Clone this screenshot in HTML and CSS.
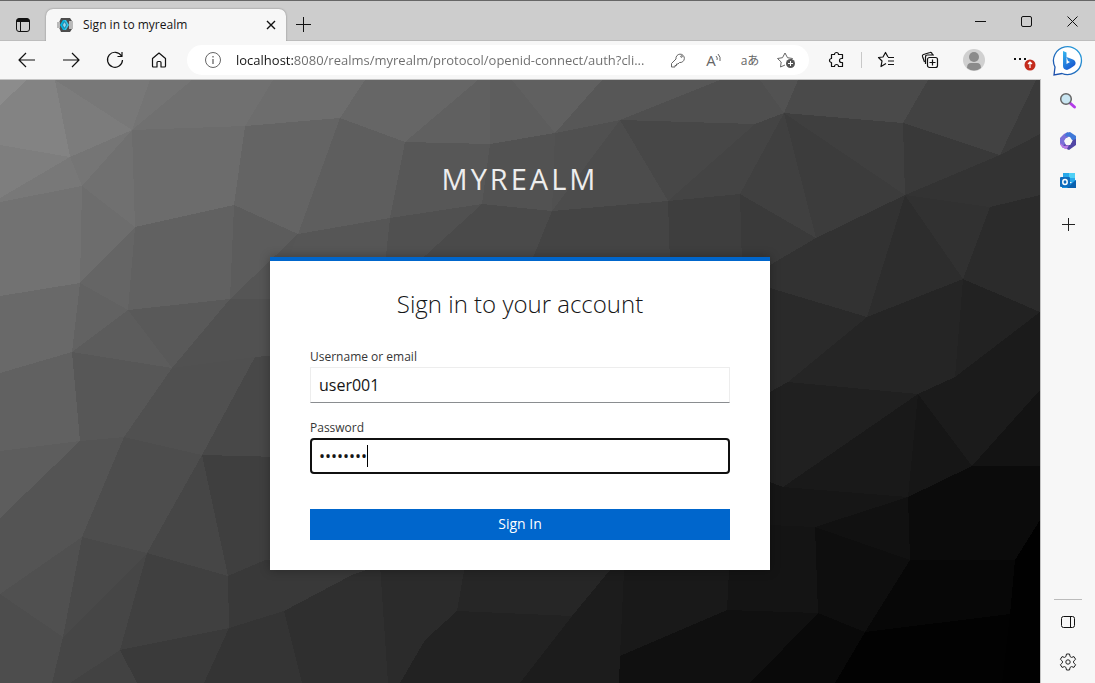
FILE: index.html
```
<!DOCTYPE html>
<html lang="en">
<head><meta charset="UTF-8"/><meta name="viewport" content="width=device-width, initial-scale=1.0"/>
<title>Sign in to myrealm</title>
<link rel="stylesheet" href="styles.css">
</head><body>
<div class="browser">
 <header class="titlebar">
  <button class="tab-menu" aria-label="Tab actions"><svg width="16" height="16" viewBox="0 0 16 16"><rect x="1.5" y="1.5" width="13" height="13" rx="2.5" fill="none" stroke="#111"/><path d="M1.500 5V4a2.500 2.500 0 0 1 2.500-2.500h8A2.500 2.500 0 0 1 14.500 4v1z" fill="#111"/><path d="M5.500 5v9.500" stroke="#111"/></svg></button>
  <div class="tab">
   <svg width="16" height="16" viewBox="0 0 16 16"><path d="M4 1h9l2 3v8l-2 3H4L1 8z" fill="#4d4d4d"/><path d="M12 4h4v8h-4z" fill="#b9b9b9"/><path d="M0 5h3v6H0z" fill="#b9b9b9"/><path d="M6 3 3 8l3 5h2L5 8l3-5z" fill="#00b8e3"/><path d="M7 3h2l3 5-3 5H7l3-5z" fill="#33c6e9"/><path d="M5 8l2.500-4.500L10 8l-2.500 4.500z" fill="#1f9cc4"/><path d="M6 8l1.500-2.500L9 8l-1.500 2.500z" fill="#a5d4e2"/></svg>
   <span class="tab-title">Sign in to myrealm</span>
   <button class="tab-close" aria-label="Close tab"><svg width="10" height="10" viewBox="0 0 10 10"><path d="M1 1l8 8M9 1L1 9" stroke="#111" stroke-width="1.4"/></svg></button>
  </div>
  <button class="tab-new" aria-label="New tab"><svg width="15" height="15" viewBox="0 0 15 15"><path d="M7.500 0v15M0 7.500h15" stroke="#111"/></svg></button>
  <div class="window-buttons">
   <button aria-label="Minimize"><svg width="11" height="11" viewBox="0 0 11 11"><path d="M0 5.500h11" stroke="#111"/></svg></button>
   <button aria-label="Maximize"><svg width="11" height="11" viewBox="0 0 11 11"><rect x=".5" y=".5" width="10" height="10" rx="1.500" fill="none" stroke="#111"/></svg></button>
   <button aria-label="Close"><svg width="11" height="11" viewBox="0 0 11 11"><path d="M.5.5l10 10M10.500.5l-10 10" stroke="#111"/></svg></button>
  </div>
 </header>
 <div class="workspace">
  <div class="content">
   <nav class="toolbar">
    <div class="nav-buttons">
     <button aria-label="Back"><svg width="18" height="18" viewBox="0 0 18 18"><path d="M17 9H1.500M8 2 1 9l7 7"/></svg></button>
     <button aria-label="Forward"><svg width="18" height="18" viewBox="0 0 18 18"><path d="M1 9h15.500M10 2l7 7-7 7"/></svg></button>
     <button aria-label="Refresh"><svg width="18" height="18" viewBox="0 0 18 18"><path d="M15.500 5A7.500 7.500 0 1 0 16.500 9M16 1v4.500h-4.500"/></svg></button>
     <button aria-label="Home"><svg width="18" height="18" viewBox="0 0 18 18"><path d="M2.500 7.500 9 2l6.500 5.500v7.500q0 1-1 1H11v-4.500q0-1-1-1H8q-1 0-1 1V16H3.500q-1 0-1-1z"/></svg></button>
    </div>
    <div class="omnibox">
     <button aria-label="Site information"><svg width="18" height="18" viewBox="0 0 18 18"><circle cx="9" cy="9" r="7.500"/><path d="M9 8v5M9 5v1.500" stroke-width="1.300"/></svg></button>
     <input class="url" type="text" aria-label="Address" value="localhost:8080/realms/myrealm/protocol/openid-connect/auth?cli..."/>
     <button aria-label="Saved passwords"><svg width="18" height="18" viewBox="0 0 18 18"><path d="M7 8a4.200 4.200 0 1 1 3.500 3.500L9 13H7.500v1.500H6V16H2.500v-3.500z"/><circle cx="12.500" cy="5.500" r=".8"/></svg></button>
     <button class="read-aloud" aria-label="Read aloud"><span>A</span><svg width="6" height="16" viewBox="0 0 6 16"><path d="M0 4q2 2 1 4M2 2q3 3 2 7"/></svg></button>
     <button class="translate" aria-label="Translate">aあ</button>
     <button aria-label="Add to favorites"><svg width="20" height="18" viewBox="0 0 20 18"><path d="M9 14 4.500 16l.7-5L1.500 7.500l5-.8L9 2l2.500 4.700 5 .8-1.500 1.500"/><circle cx="14.500" cy="12.500" r="4.500" fill="#555" stroke="none"/><path d="M14.500 10v5M12 12.500h5" stroke="#fff"/></svg></button>
    </div>
    <div class="tools">
     <button aria-label="Extensions"><svg width="18" height="18" viewBox="0 0 18 18"><path d="M3.500 3.500h3a2 2 0 0 1 4 0h4v4h-1a2 2 0 0 0 0 4h1v4h-4a2 2 0 0 0-4 0h-3v-4a2 2 0 0 1 0-4z"/></svg></button>
     <span class="divider"></span>
     <button aria-label="Favorites"><svg width="18" height="18" viewBox="0 0 18 18"><path d="M9 12.500 4 15.500l1-5.500L1.500 6.500 6 6l2.500-4.500L11 6M11 6.500h6M11 10h6M11 13.500h6"/></svg></button>
     <button aria-label="Collections"><svg width="18" height="18" viewBox="0 0 18 18"><path d="M3.500 11 1.500 5.500Q1 4 2.500 3.500L9 1.500q1.500-.5 2 1l.5 1.500"/><path d="M4.500 13V6q0-2 2-2H13"/><rect x="6.500" y="6.500" width="10" height="10" rx="2"/><path d="M11.500 8.500v6M8.500 11.500h6"/></svg></button>
     <button aria-label="Profile"><svg width="22" height="22" viewBox="0 0 22 22"><circle cx="11" cy="11" r="11" fill="#d0d0d0" stroke="none"/><circle cx="11" cy="8" r="5" fill="#8b8b8b" stroke="none"/><path d="M4 19q0-5 4-5h6q4 0 4 5-7 5-14 0z" fill="#8b8b8b" stroke="none"/></svg></button>
     <button aria-label="Settings and more, update available"><svg width="32" height="24" viewBox="0 0 32 24"><path d="M12 10h2v2h-2zM17 10h2v2h-2zM22 10h2v2h-2z" fill="#111" stroke="none"/><circle cx="28" cy="17" r="5.500" fill="#c42b1c" stroke="none"/><path d="M28 20v-6M26 16l2-2 2 2" stroke="#fff"/></svg></button>
    </div>
   </nav>
   <main class="login-page">
    <svg class="facets" viewBox="0 0 1040 603" preserveAspectRatio="none" aria-hidden="true">
     <polygon points="0,0 27,0 0,25" fill="#8c8c8c"/>
     <polygon points="27,0 55,0 70,77 0,65 0,25" fill="#838383"/>
     <polygon points="55,0 132,50 70,77" fill="#7c7c7c"/>
     <polygon points="55,0 150,0 132,50" fill="#787878"/>
     <polygon points="150,0 192,0 132,50" fill="#747474"/>
     <polygon points="192,0 273,0 245,46 132,50" fill="#707070"/>
     <polygon points="273,0 365,0 340,38 245,46" fill="#6d6d6d"/>
     <polygon points="365,0 478,0 405,62 340,38" fill="#666666"/>
     <polygon points="478,0 490,0 490,64 405,62" fill="#606060"/>
     <polygon points="490,0 512,0 555,53 490,64" fill="#5d5d5d"/>
     <polygon points="512,0 602,0 555,53" fill="#606060"/>
     <polygon points="602,0 720,0 620,40 555,53" fill="#575757"/>
     <polygon points="720,0 760,0 784,33 755,44 620,40" fill="#4f4f4f"/>
     <polygon points="760,0 798,0 784,33" fill="#525252"/>
     <polygon points="798,0 928,0 903,43 784,33" fill="#4a4a4a"/>
     <polygon points="928,0 1036,0 1000,75 903,43" fill="#424242"/>
     <polygon points="1036,0 1040,0 1040,54 1000,75" fill="#3a3a3a"/>
     <polygon points="0,65 70,77 0,118" fill="#7e7e7e"/>
     <polygon points="0,118 70,77 82,106 0,122" fill="#787878"/>
     <polygon points="70,77 132,50 82,106" fill="#757575"/>
     <polygon points="132,50 135,147 82,106" fill="#707070"/>
     <polygon points="132,50 245,46 234,125 135,147" fill="#6c6c6c"/>
     <polygon points="245,46 340,38 298,154 234,125" fill="#646464"/>
     <polygon points="340,38 405,62 390,138 298,154" fill="#5e5e5e"/>
     <polygon points="405,62 490,64 482,124 390,138" fill="#575757"/>
     <polygon points="490,64 555,53 552,131 482,124" fill="#525252"/>
     <polygon points="555,53 620,40 552,131" fill="#505050"/>
     <polygon points="620,40 668,121 552,131" fill="#4c4c4c"/>
     <polygon points="620,40 755,44 668,121" fill="#474747"/>
     <polygon points="755,44 784,33 740,114 668,121" fill="#444444"/>
     <polygon points="784,33 816,158 740,114" fill="#404040"/>
     <polygon points="784,33 905,115 816,158" fill="#3c3c3c"/>
     <polygon points="784,33 903,43 905,115" fill="#3f3f3f"/>
     <polygon points="903,43 1000,75 905,115" fill="#393939"/>
     <polygon points="1000,75 1040,54 1040,115 990,127 905,115" fill="#333333"/>
     <polygon points="0,122 82,106 80,203 0,216" fill="#727272"/>
     <polygon points="82,106 135,147 80,203" fill="#6d6d6d"/>
     <polygon points="135,147 128,230 80,203" fill="#656565"/>
     <polygon points="135,147 234,125 230,219 128,230" fill="#616161"/>
     <polygon points="234,125 298,154 230,219" fill="#5c5c5c"/>
     <polygon points="298,154 280,219 230,219" fill="#555555"/>
     <polygon points="298,154 390,138 385,185 280,200" fill="#565656"/>
     <polygon points="390,138 482,124 415,185 385,185" fill="#505050"/>
     <polygon points="482,124 552,131 530,185 415,185" fill="#4a4a4a"/>
     <polygon points="552,131 668,121 670,185 530,185" fill="#444444"/>
     <polygon points="668,121 740,114 742,185 670,185" fill="#3e3e3e"/>
     <polygon points="740,114 816,158 770,185 742,185" fill="#3a3a3a"/>
     <polygon points="816,158 905,115 867,237 770,208 770,185" fill="#323232"/>
     <polygon points="905,115 963,199 867,237" fill="#2d2d2d"/>
     <polygon points="905,115 990,127 963,199" fill="#313131"/>
     <polygon points="990,127 1040,115 1040,232 963,199" fill="#2b2b2b"/>
     <polygon points="0,216 80,203 72,272 0,293" fill="#696969"/>
     <polygon points="80,203 128,230 72,272" fill="#626262"/>
     <polygon points="128,230 172,288 72,272" fill="#5c5c5c"/>
     <polygon points="128,230 230,219 172,288" fill="#595959"/>
     <polygon points="230,219 280,219 280,278 172,288" fill="#515151"/>
     <polygon points="0,293 72,272 80,361 0,371" fill="#616161"/>
     <polygon points="72,272 172,288 124,357 80,361" fill="#575757"/>
     <polygon points="172,288 255,277 243,300 202,375 124,357" fill="#505050"/>
     <polygon points="255,277 280,275 280,378 202,375" fill="#484848"/>
     <polygon points="0,371 80,361 0,438" fill="#5d5d5d"/>
     <polygon points="80,361 124,357 82,457 0,514 0,438" fill="#545454"/>
     <polygon points="124,357 202,375 147,473 82,457" fill="#4d4d4d"/>
     <polygon points="202,375 228,496 147,473" fill="#464646"/>
     <polygon points="202,375 280,377 280,475 228,496" fill="#3f3f3f"/>
     <polygon points="0,514 82,457 63,557" fill="#505050"/>
     <polygon points="0,514 63,557 52,603 0,603" fill="#4d4d4d"/>
     <polygon points="82,457 147,473 63,557" fill="#494949"/>
     <polygon points="63,557 147,473 120,570 70,603 52,603" fill="#464646"/>
     <polygon points="147,473 228,496 229,548 120,570" fill="#404040"/>
     <polygon points="228,496 265,480 380,485 352,495 284,531 229,548" fill="#393939"/>
     <polygon points="120,570 137,603 70,603" fill="#424242"/>
     <polygon points="120,570 229,548 204,603 137,603" fill="#3a3a3a"/>
     <polygon points="229,548 284,531 302,603 204,603" fill="#343434"/>
     <polygon points="284,531 352,495 380,485 388,603 302,603" fill="#2f2f2f"/>
     <polygon points="380,485 465,485 457,531 425,560 400,603 388,603" fill="#2b2b2b"/>
     <polygon points="457,531 572,536 520,603 400,603 425,560" fill="#222222"/>
     <polygon points="465,485 610,490 572,536 457,531" fill="#262626"/>
     <polygon points="610,490 624,490 620,576 619,603 520,603 572,536" fill="#1c1c1c"/>
     <polygon points="624,490 729,490 727,530 620,576" fill="#191919"/>
     <polygon points="727,530 818,533 750,603 619,603 620,576" fill="#101010"/>
     <polygon points="729,490 770,445 815,447 818,533 727,530" fill="#141414"/>
     <polygon points="818,533 865,552 835,603 750,603" fill="#090909"/>
     <polygon points="815,447 910,480 865,552 818,533" fill="#0e0e0e"/>
     <polygon points="770,208 867,237 788,302 770,312" fill="#2a2a2a"/>
     <polygon points="867,237 963,199 955,297 918,314 788,302" fill="#252525"/>
     <polygon points="963,199 1040,232 955,297" fill="#222222"/>
     <polygon points="955,297 1040,232 1040,310 972,386 918,314" fill="#1b1b1b"/>
     <polygon points="788,302 918,314 783,407 770,402 770,312" fill="#202020"/>
     <polygon points="918,314 908,417 783,407" fill="#191919"/>
     <polygon points="918,314 972,386 908,417" fill="#161616"/>
     <polygon points="770,402 783,407 908,417 815,447 770,445" fill="#161616"/>
     <polygon points="908,417 910,480 815,447" fill="#111111"/>
     <polygon points="1040,310 1040,386 972,386" fill="#131313"/>
     <polygon points="972,386 1040,386 1040,440 1015,480 910,480 908,417" fill="#0b0b0b"/>
     <polygon points="910,480 1015,480 1010,534 865,552" fill="#070707"/>
     <polygon points="865,552 1010,534 1002,603 835,603" fill="#020202"/>
     <polygon points="1015,480 1040,440 1040,603 1002,603 1010,534" fill="#010101"/>
    </svg>
    <div class="login">
     <h1 class="realm">myrealm</h1>
     <form class="card">
      <h2>Sign in to your account</h2>
      <label for="username">Username or email</label>
      <input id="username" type="text" value="user001"/>
      <label for="password">Password</label>
      <div class="password-field">
       <input id="password" type="password" value="password"/>
       <span class="caret"></span>
      </div>
      <button type="button">Sign In</button>
     </form>
    </div>
   </main>
  </div>
  <aside class="sidebar">
   <button aria-label="Bing Chat"><svg width="32" height="32" viewBox="0 0 32 32"><defs><linearGradient id="ring" x1="0" y1="1" x2="1" y2="0"><stop offset="0" stop-color="#1b4aa8"/><stop offset="1" stop-color="#2aa5e0"/></linearGradient><linearGradient id="bing" x1="0" y1="0" x2="0.600" y2="1"><stop offset="0" stop-color="#35b8f0"/><stop offset="1" stop-color="#1858d0"/></linearGradient></defs><path d="M2 30 3 22A14 14 0 1 1 10 28.500z" fill="#fff" stroke="url(#ring)" stroke-width="1.300"/><path d="M11 6l3.500 1.500V19l3.500-2-2-1-1.500-4 6.500 2.500q3 1.500 2.500 4.500-.5 2-8.500 6-4-.5-4-4z" fill="url(#bing)"/></svg></button>
   <button aria-label="Search"><svg width="18" height="18" viewBox="0 0 18 18"><path d="M11 11l4.500 4" stroke="#b23be8" stroke-width="3" stroke-linecap="round"/><circle cx="7" cy="7" r="5.300" fill="#c9e6f2" stroke="#666" stroke-width="1.500"/></svg></button>
   <button aria-label="Microsoft 365"><svg width="18" height="18" viewBox="0 0 18 18"><path d="M9 0 5 2 1 6v6l3 4 3-3-1-5 4-4z" fill="#7b6fd8"/><path d="M7 1l4-1 6 4v6l-4-2-2-3-5-1z" fill="#3f78d8"/><path d="M17 7v6l-7 5-7-3 3-3 5 1 3-5z" fill="#5146a5"/><path d="M1 11l4 3 5-1-2 4-2 0-4-3z" fill="#b77be5"/><path d="M7 6h4l2 3-2 4H7L5 9z" fill="#f7f7f7"/></svg></button>
   <button aria-label="Outlook"><svg width="18" height="18" viewBox="0 0 18 18"><path d="M4 1h12v9H4z" fill="#28a8ea"/><path d="M10 1h6v5h-6z" fill="#50d0f5"/><path d="M3 8l7 4 7-4v8H3z" fill="#1490df"/><path d="M17 8v8H8z" fill="#0a60ad"/><rect x="1" y="5" width="10" height="10" rx="1" fill="#0f6cbd"/><ellipse cx="6" cy="10" rx="2.200" ry="2.500" fill="none" stroke="#fff" stroke-width="1.500"/></svg></button>
   <button class="sidebar-add" aria-label="Customize"><svg width="13" height="13" viewBox="0 0 13 13"><path d="M6.500 0v13M0 6.500h13" stroke="#222"/></svg></button>
   <hr/>
   <button aria-label="Hide sidebar"><svg width="14" height="12" viewBox="0 0 14 12"><rect x=".5" y=".5" width="13" height="11" rx="2" fill="none" stroke="#111"/><path d="M9.500.5v11" stroke="#111"/></svg></button>
   <button aria-label="Settings"><svg width="18" height="18" viewBox="0 0 18 18"><path d="M7.500 1h3l.6 2.600 1.400.8 2.500-.8 1.600 2.700-2 1.800v1.800l2 1.800-1.600 2.700-2.500-.8-1.400.8-.6 2.600h-3l-.6-2.600-1.400-.8-2.500.8-1.600-2.700 2-1.800V8.100l-2-1.800L3 3.600l2.500.8 1.400-.8z" fill="none" stroke="#222" stroke-linejoin="round"/><circle cx="9" cy="9" r="2.200" fill="none" stroke="#222"/></svg></button>
  </aside>
 </div>
</div>
</body></html>
```
FILE: styles.css
```
*{box-sizing:border-box;}
body{margin:0;font-family:"Open Sans",sans-serif;color:#151515;}
button{border:none;padding:0;background:none;font-family:inherit;color:inherit;cursor:pointer;}
svg{display:block;}
.browser{display:flex;flex-direction:column;height:100vh;overflow:hidden;}

/* tab strip */
.titlebar{display:flex;height:41px;flex:none;background:#cdcdcd;border-top:1px solid #666;box-shadow:inset 0 -1px #bdbdbd;}
.titlebar button{display:flex;align-items:center;justify-content:center;}
.tab-menu{width:46px;padding-top:7px;}
.tab{display:flex;align-items:center;gap:10px;width:240px;margin-top:8px;padding:0 10px 0 11px;background:#f7f7f7;border-radius:7px 7px 0 0;box-shadow:0 0 2px rgba(0,0,0,.4);clip-path:inset(-3px -3px 0);}
.tab-title{flex:1;padding-bottom:2px;font-size:12px;white-space:nowrap;}
.tab-new{width:34px;padding-top:7px;}
.window-buttons{display:flex;margin-left:auto;}
.window-buttons button{width:46px;}

.workspace{display:flex;flex:1;min-height:0;background:#f7f7f7;}
.content{display:flex;flex-direction:column;flex:1;min-width:0;}

/* toolbar */
.toolbar{display:flex;align-items:center;height:39px;flex:none;padding:0 7px 0 5px;border-bottom:1px solid #c4c4c4;}
.toolbar button{display:flex;align-items:center;justify-content:center;height:30px;}
.toolbar svg{fill:none;stroke:#111;stroke-width:1.2;stroke-linejoin:round;overflow:visible;}
.nav-buttons{display:flex;}
.nav-buttons button{width:44px;}
.omnibox{display:flex;align-items:center;flex:1;min-width:0;height:30px;margin:0 12px 0 6px;padding:0 5px 0 8px;background:#fff;border-radius:15px;}
.omnibox button{width:36px;color:#666;}
.omnibox svg{stroke:#666;stroke-width:1;}
.url{flex:1;min-width:0;height:30px;border:none;outline:none;padding:0 0 0 5px;font-family:inherit;font-size:13px;color:transparent;background:linear-gradient(90deg,#151515 63px,#6c6c6c 63px);-webkit-background-clip:text;background-clip:text;}
.read-aloud span{font-size:15px;}
.translate{font-family:"Open Sans","Noto Sans CJK JP",sans-serif;font-size:12px;}
.tools{display:flex;align-items:center;gap:12px;}
.tools button{width:32px;}
.divider{width:1px;height:16px;margin:0 -4px;background:#c8c8c8;}

/* login page */
.login-page{position:relative;flex:1;min-height:0;border-right:1px solid #c4c4c4;background:linear-gradient(135deg,#858585,#444 45%,#000);overflow:hidden;}
.facets{position:absolute;inset:0;width:100%;height:100%;shape-rendering:crispEdges;}
.login{position:relative;display:flex;flex-direction:column;align-items:center;padding-top:79px;}
.realm{margin:0 0 58px;font-size:29px;line-height:40px;font-weight:400;letter-spacing:3px;text-transform:uppercase;color:#ededed;}
.card{display:flex;flex-direction:column;width:100%;max-width:500px;padding:27px 40px 30px;border-top:4px solid #06c;background:#fff;box-shadow:0 0 10px rgba(0,0,0,.3);}
.card h2{margin:0 0 29px;font-size:24px;line-height:32px;font-weight:300;text-align:center;}
.card label{margin-bottom:2px;font-size:12px;line-height:16px;color:#363636;}
.card input{width:100%;height:36px;margin:0;padding:0 8px;border:1px solid #ededed;border-bottom-color:#8a8d90;outline:none;background:#fff;font-family:inherit;font-size:16px;color:#151515;}
#username{margin-bottom:17px;}
.card #password{padding:0 7px;border:2px solid #101010;border-radius:4px;}
.password-field{position:relative;margin-bottom:35px;}
.caret{position:absolute;left:57px;top:7px;width:1px;height:22px;background:#000;}
.card button{height:31px;padding-bottom:2px;background:#06c;color:#fff;font-size:14px;}

/* edge sidebar */
.sidebar{display:flex;flex-direction:column;align-items:center;width:54px;flex:none;padding-bottom:1px;}
.sidebar button{display:flex;align-items:center;justify-content:center;width:40px;height:40px;}
.sidebar-add{margin-top:3px;}
.sidebar hr{width:28px;margin:auto 0 2px;border:none;border-top:1px solid #bbb;}
```
